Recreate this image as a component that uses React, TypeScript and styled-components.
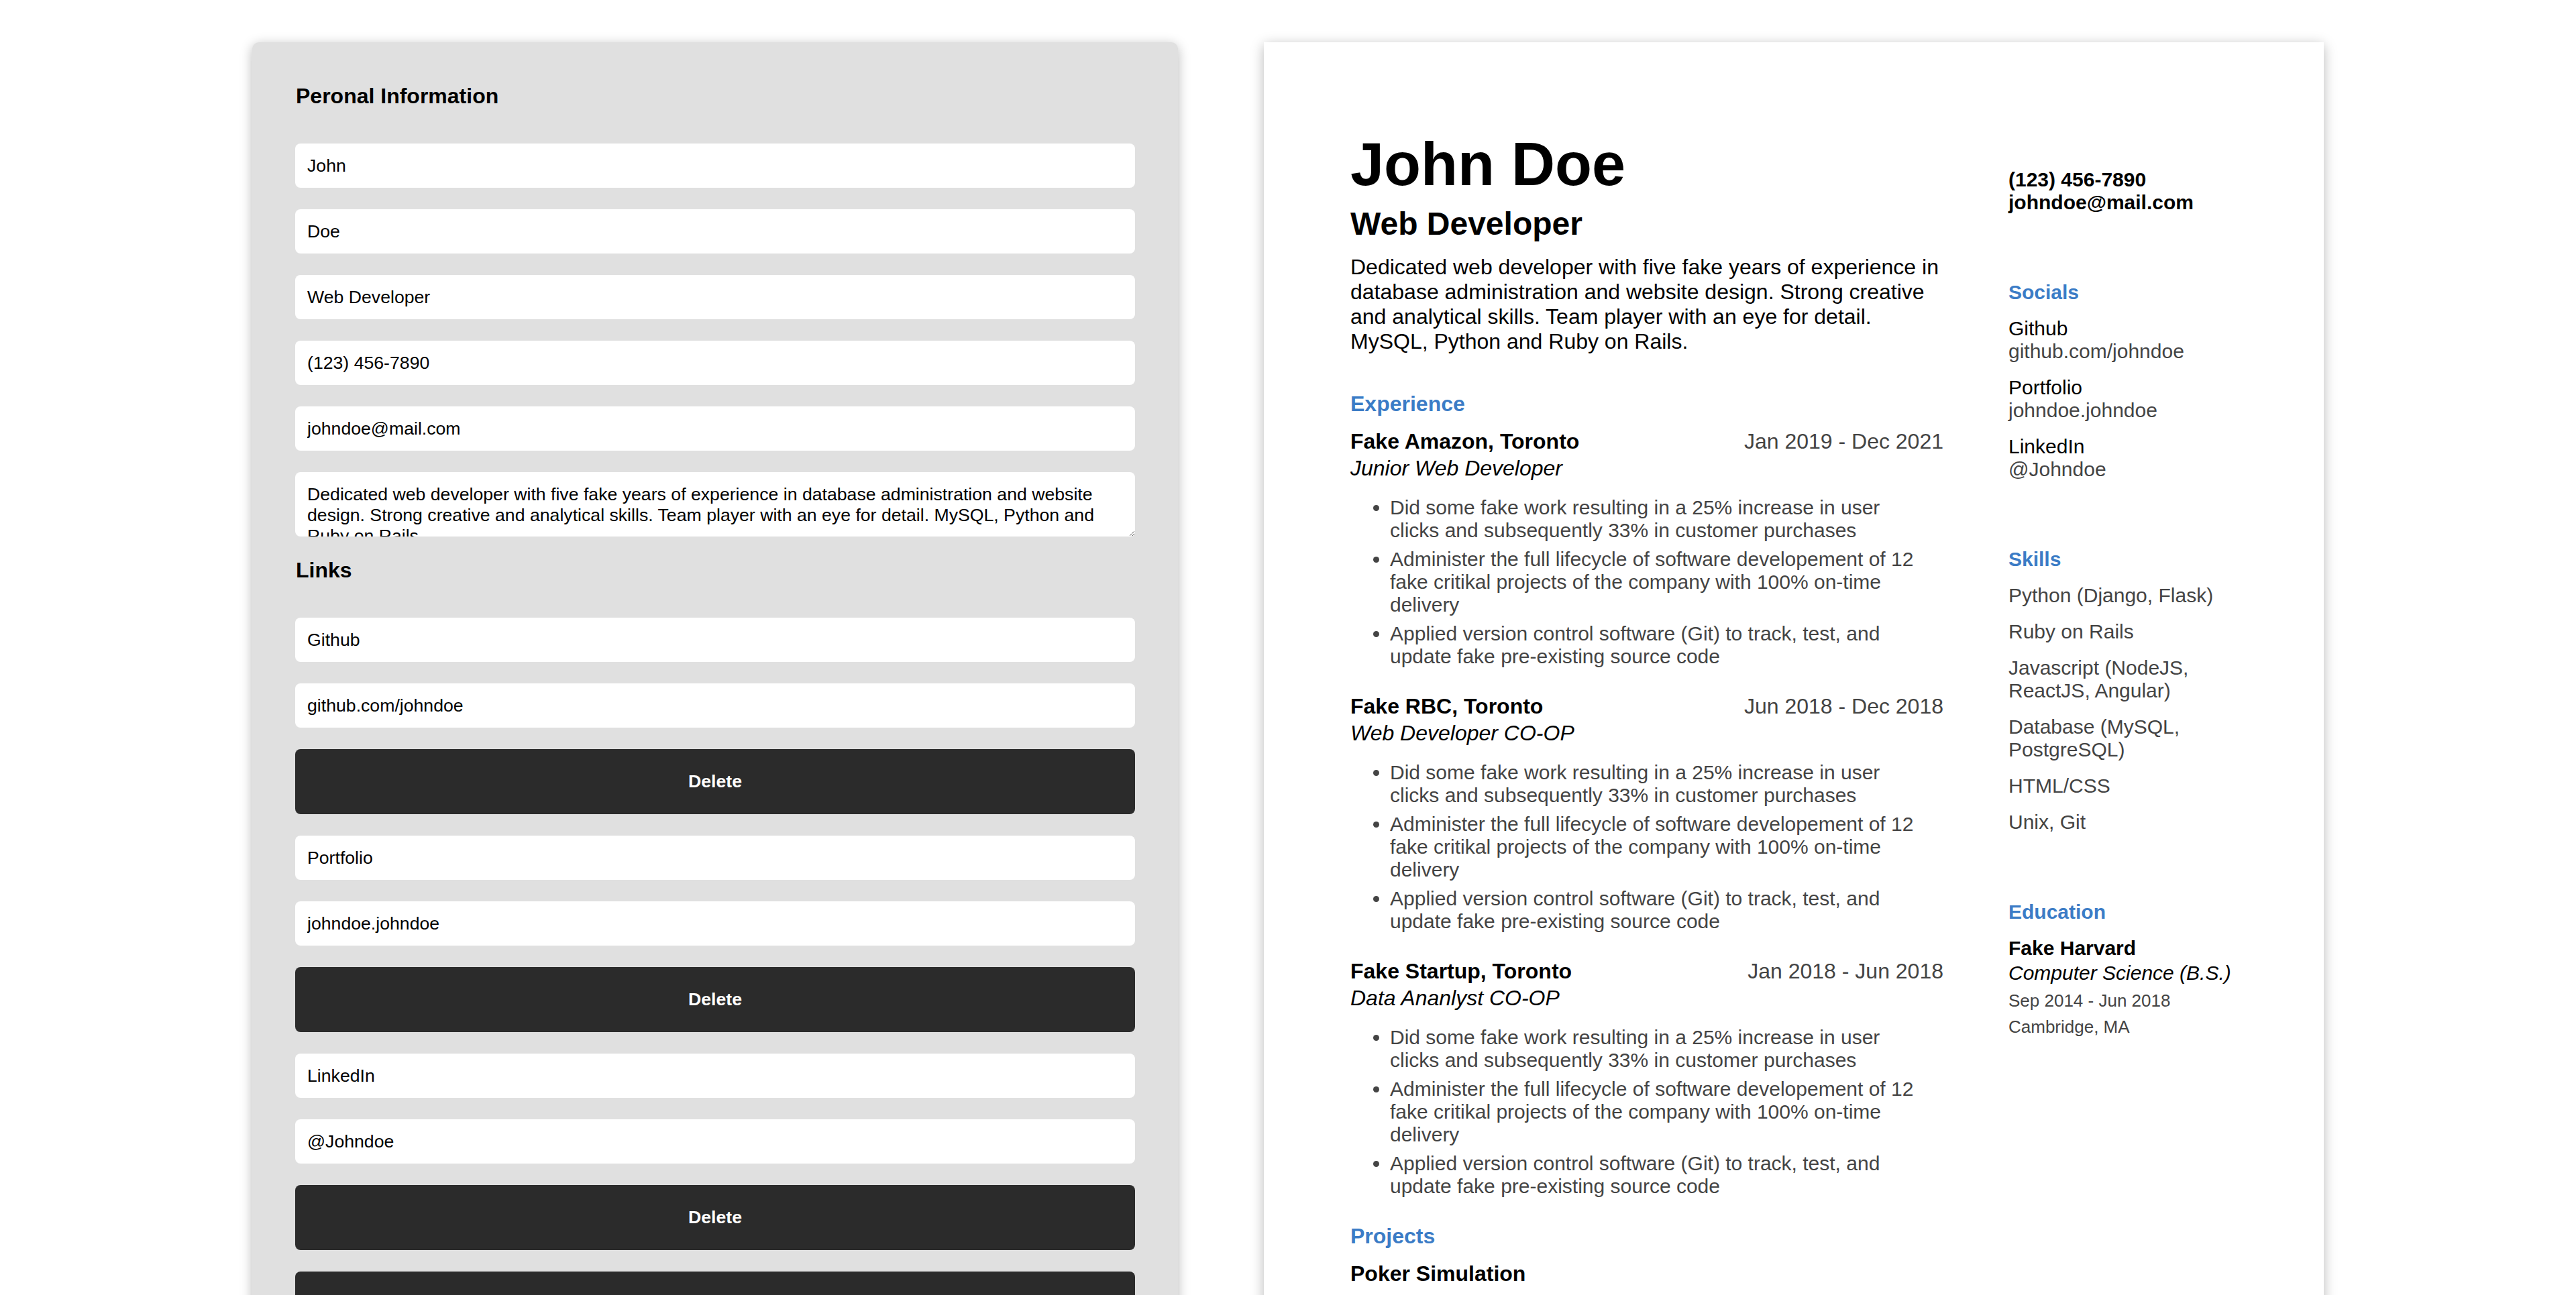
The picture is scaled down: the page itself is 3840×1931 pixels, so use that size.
import React from "react";
import styled, { createGlobalStyle } from "styled-components";

const GlobalStyle = createGlobalStyle`
  html { overflow: hidden; }
  body {
    margin: 0;
    background: #ffffff;
    font-family: "Liberation Sans", Arial, Helvetica, sans-serif;
    color: #000;
  }
  * { box-sizing: border-box; }
`;

const Page = styled.div`
  display: flex;
  justify-content: center;
  align-items: flex-start;
  gap: 128px;
  padding-top: 63px;
`;

/* ---------- Editor panel ---------- */

const Editor = styled.form`
  width: 1380px;
  background: #e0e0e0;
  border-radius: 10px;
  box-shadow: 0 4px 18px rgba(0, 0, 0, 0.28);
  padding: 62px 64px 64px 64px;
  display: flex;
  flex-direction: column;
  gap: 32px;
  min-height: 2400px;
`;

const EditorTitle = styled.h3`
  margin: 0 0 20px 1px;
  font-size: 32px;
  font-weight: 700;
  line-height: normal;
`;

const Field = styled.input`
  display: block;
  width: 100%;
  height: 66px;
  padding: 0 18px;
  border: none;
  border-radius: 8px;
  background: #ffffff;
  font-family: "Liberation Sans", Arial, Helvetica, sans-serif;
  font-size: 26.67px;
  color: #000;
  outline: none;
`;

const Area = styled.textarea`
  display: block;
  width: 100%;
  height: 96px;
  padding: 18px;
  border: none;
  border-radius: 8px;
  background: #ffffff;
  font-family: "Liberation Sans", Arial, Helvetica, sans-serif;
  font-size: 26.67px;
  line-height: normal;
  color: #000;
  outline: none;
  overflow: hidden;
  resize: vertical;
`;

const DarkButton = styled.button`
  display: block;
  width: 100%;
  height: 97px;
  border: none;
  border-radius: 8px;
  background: #2b2b2b;
  color: #ffffff;
  font-family: "Liberation Sans", Arial, Helvetica, sans-serif;
  font-size: 26.67px;
  font-weight: 700;
  cursor: pointer;
`;

/* ---------- Resume panel ---------- */

const Resume = styled.article`
  width: 1580px;
  min-height: 2400px;
  background: #ffffff;
  box-shadow: 0 4px 18px rgba(0, 0, 0, 0.28);
  padding: 131px 129px 128px 129px;
  display: grid;
  grid-template-columns: 884px 341px;
  column-gap: 97px;
  align-items: start;
`;

const MainCol = styled.div`
  display: flex;
  flex-direction: column;
`;

const Name = styled.h1`
  margin: 0;
  font-size: 90px;
  font-weight: 700;
  line-height: normal;
`;

const Headline = styled.h2`
  margin: 9px 0 0;
  font-size: 48px;
  font-weight: 700;
  line-height: normal;
`;

const Summary = styled.p`
  margin: 19px 0 56px;
  font-size: 32px;
  line-height: normal;
`;

const SectionTitle = styled.h3<{ $size?: number }>`
  margin: 0 0 19px;
  font-size: ${(p) => p.$size ?? 32}px;
  font-weight: 700;
  line-height: normal;
  color: #3b7cc6;
`;

const Job = styled.section`
  margin-bottom: 39px;
`;

const JobHead = styled.div`
  display: flex;
  justify-content: space-between;
  align-items: baseline;
  font-size: 32px;
  line-height: normal;
`;

const Company = styled.span`
  font-weight: 700;
`;

const Dates = styled.span`
  color: #444444;
`;

const Role = styled.div`
  margin-top: 3px;
  font-size: 32px;
  font-style: italic;
  line-height: normal;
`;

const Bullets = styled.ul`
  margin: 23px 0 0;
  padding: 0 25px 0 59px;
  list-style: disc;
`;

const Bullet = styled.li`
  font-size: 30px;
  line-height: normal;
  color: #444444;
  & + & {
    margin-top: 9px;
  }
`;

const ProjectName = styled.div`
  font-size: 32px;
  font-weight: 700;
  line-height: normal;
`;

/* ---------- Resume sidebar ---------- */

const Side = styled.aside`
  padding-top: 57px;
  display: flex;
  flex-direction: column;
  gap: 100px;
`;

const Contact = styled.div`
  font-size: 30px;
  font-weight: 700;
  line-height: normal;
`;

const SideBlock = styled.div`
  display: flex;
  flex-direction: column;
`;

const SideList = styled.div`
  display: flex;
  flex-direction: column;
  gap: 20px;
  margin-top: 1px;
`;

const SideItem = styled.div<{ $muted?: boolean }>`
  font-size: 30px;
  line-height: normal;
  color: ${(p) => (p.$muted ? "#444444" : "#000000")};
`;

const Muted = styled.div`
  color: #444444;
`;

const EduLine = styled.div<{ $bold?: boolean; $italic?: boolean }>`
  font-size: 30px;
  line-height: 36.5px;
  font-weight: ${(p) => (p.$bold ? 700 : 400)};
  font-style: ${(p) => (p.$italic ? "italic" : "normal")};
`;

const EduSmallGroup = styled.div`
  margin-top: 4px;
`;

const EduSmall = styled.div`
  font-size: 26px;
  line-height: 39px;
  color: #444444;
`;

const summaryText =
  "Dedicated web developer with five fake years of experience in database administration and website design. Strong creative and analytical skills. Team player with an eye for detail. MySQL, Python and Ruby on Rails.";

const bullets = [
  "Did some fake work resulting in a 25% increase in user clicks and subsequently 33% in customer purchases",
  "Administer the full lifecycle of software developement of 12 fake critikal projects of the company with 100% on-time delivery",
  "Applied version control software (Git) to track, test, and update fake pre-existing source code",
];

const jobs = [
  { company: "Fake Amazon, Toronto", dates: "Jan 2019 - Dec 2021", role: "Junior Web Developer" },
  { company: "Fake RBC, Toronto", dates: "Jun 2018 - Dec 2018", role: "Web Developer CO-OP" },
  { company: "Fake Startup, Toronto", dates: "Jan 2018 - Jun 2018", role: "Data Ananlyst CO-OP" },
];

const links = [
  { name: "Github", url: "github.com/johndoe" },
  { name: "Portfolio", url: "johndoe.johndoe" },
  { name: "LinkedIn", url: "@Johndoe" },
];

const skills = [
  "Python (Django, Flask)",
  "Ruby on Rails",
  "Javascript (NodeJS, ReactJS, Angular)",
  "Database (MySQL, PostgreSQL)",
  "HTML/CSS",
  "Unix, Git",
];

export default function App() {
  return (
    <>
      <GlobalStyle />
      <Page>
        <Editor onSubmit={(e) => e.preventDefault()}>
          <EditorTitle>Peronal Information</EditorTitle>
          <Field defaultValue="John" />
          <Field defaultValue="Doe" />
          <Field defaultValue="Web Developer" />
          <Field defaultValue="(123) 456-7890" />
          <Field defaultValue="johndoe@mail.com" />
          <Area defaultValue={summaryText} />
          <EditorTitle>Links</EditorTitle>
          {links.map((l) => (
            <React.Fragment key={l.name}>
              <Field defaultValue={l.name} />
              <Field defaultValue={l.url} />
              <DarkButton type="button">Delete</DarkButton>
            </React.Fragment>
          ))}
          <DarkButton type="button">Add</DarkButton>
        </Editor>

        <Resume>
          <MainCol>
            <Name>John Doe</Name>
            <Headline>Web Developer</Headline>
            <Summary>{summaryText}</Summary>
            <SectionTitle>Experience</SectionTitle>
            {jobs.map((j) => (
              <Job key={j.company}>
                <JobHead>
                  <Company>{j.company}</Company>
                  <Dates>{j.dates}</Dates>
                </JobHead>
                <Role>{j.role}</Role>
                <Bullets>
                  {bullets.map((b) => (
                    <Bullet key={b}>{b}</Bullet>
                  ))}
                </Bullets>
              </Job>
            ))}
            <SectionTitle>Projects</SectionTitle>
            <ProjectName>Poker Simulation</ProjectName>
          </MainCol>

          <Side>
            <Contact>
              <div>(123) 456-7890</div>
              <div>johndoe@mail.com</div>
            </Contact>

            <SideBlock>
              <SectionTitle $size={30}>Socials</SectionTitle>
              <SideList>
                {links.map((l) => (
                  <SideItem key={l.name}>
                    <div>{l.name}</div>
                    <Muted>{l.url}</Muted>
                  </SideItem>
                ))}
              </SideList>
            </SideBlock>

            <SideBlock>
              <SectionTitle $size={30}>Skills</SectionTitle>
              <SideList>
                {skills.map((s) => (
                  <SideItem key={s} $muted>
                    {s}
                  </SideItem>
                ))}
              </SideList>
            </SideBlock>

            <SideBlock>
              <SectionTitle $size={30}>Education</SectionTitle>
              <EduLine $bold>Fake Harvard</EduLine>
              <EduLine $italic>Computer Science (B.S.)</EduLine>
              <EduSmallGroup>
                <EduSmall>Sep 2014 - Jun 2018</EduSmall>
                <EduSmall>Cambridge, MA</EduSmall>
              </EduSmallGroup>
            </SideBlock>
          </Side>
        </Resume>
      </Page>
    </>
  );
}
